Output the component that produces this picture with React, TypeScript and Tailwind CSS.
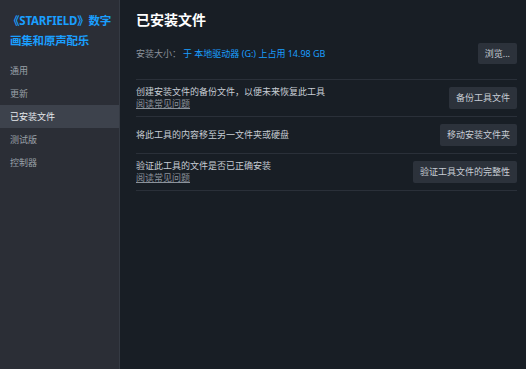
import React from "react";

const font = { fontFamily: '"Noto Sans", "Noto Sans CJK SC", sans-serif' };

function Row({ text, link, button }: { text: string; link?: boolean; button: string }) {
  return (
    <div className="flex items-center justify-between border-b border-[#2a3039] h-[37px]">
      <div className="flex flex-col">
        <span className="text-[9px] leading-[12px] text-[#c7cdd4]">{text}</span>
        {link && (
          <span className="text-[9px] leading-[12px] text-[#8b929b] underline">阅读常见问题</span>
        )}
      </div>
      <button className="h-[22px] px-[7px] rounded-[2px] bg-[#2c323b] text-[9px] text-[#c7cdd4]">
        {button}
      </button>
    </div>
  );
}

export default function App() {
  const nav = ["通用", "更新", "已安装文件", "测试版", "控制器"];
  return (
    <div className="flex w-[526px] h-[369px] overflow-hidden bg-[#181e25]" style={font}>
      <div className="w-[120px] shrink-0 bg-[#2b2e36] border-r border-[#353a43] flex flex-col">
        <div className="pl-[8px] pt-[11px] text-[11.5px] leading-[20px] font-bold text-[#1a9fff] whitespace-nowrap tracking-[-0.2px]">
          《STARFIELD》数字
          <br />
          <span className="pl-[2px]">画集和原声配乐</span>
        </div>
        <div className="mt-[8px] flex flex-col">
          {nav.map((n) => (
            <div
              key={n}
              className={
                "h-[23px] flex items-center px-[10px] text-[9px] " +
                (n === "已安装文件" ? "bg-[#3d424c] text-[#e6e9ed]" : "text-[#9aa0a8]")
              }
            >
              {n}
            </div>
          ))}
        </div>
      </div>
      <div className="flex-1 pl-[16px] pr-[9px] pt-[9px]">
        <div className="text-[14px] leading-[22px] font-bold text-white">已安装文件</div>
        <div className="flex items-start justify-between border-b border-[#2a3039] h-[49px] pt-[12px]">
          <div className="text-[9px] flex items-center h-[21px]">
            <span className="text-[#8b929b] w-[47px]">安装大小：</span>
            <span className="text-[#1a9fff]">于 本地驱动器 (G:) 上占用 14.98 GB</span>
          </div>
          <button className="h-[21px] px-[7px] rounded-[2px] bg-[#2c323b] text-[9px] text-[#c7cdd4]">
            浏览...
          </button>
        </div>
        <Row text="创建安装文件的备份文件，以便未来恢复此工具" link button="备份工具文件" />
        <Row text="将此工具的内容移至另一文件夹或硬盘" button="移动安装文件夹" />
        <Row text="验证此工具的文件是否已正确安装" link button="验证工具文件的完整性" />
      </div>
    </div>
  );
}
